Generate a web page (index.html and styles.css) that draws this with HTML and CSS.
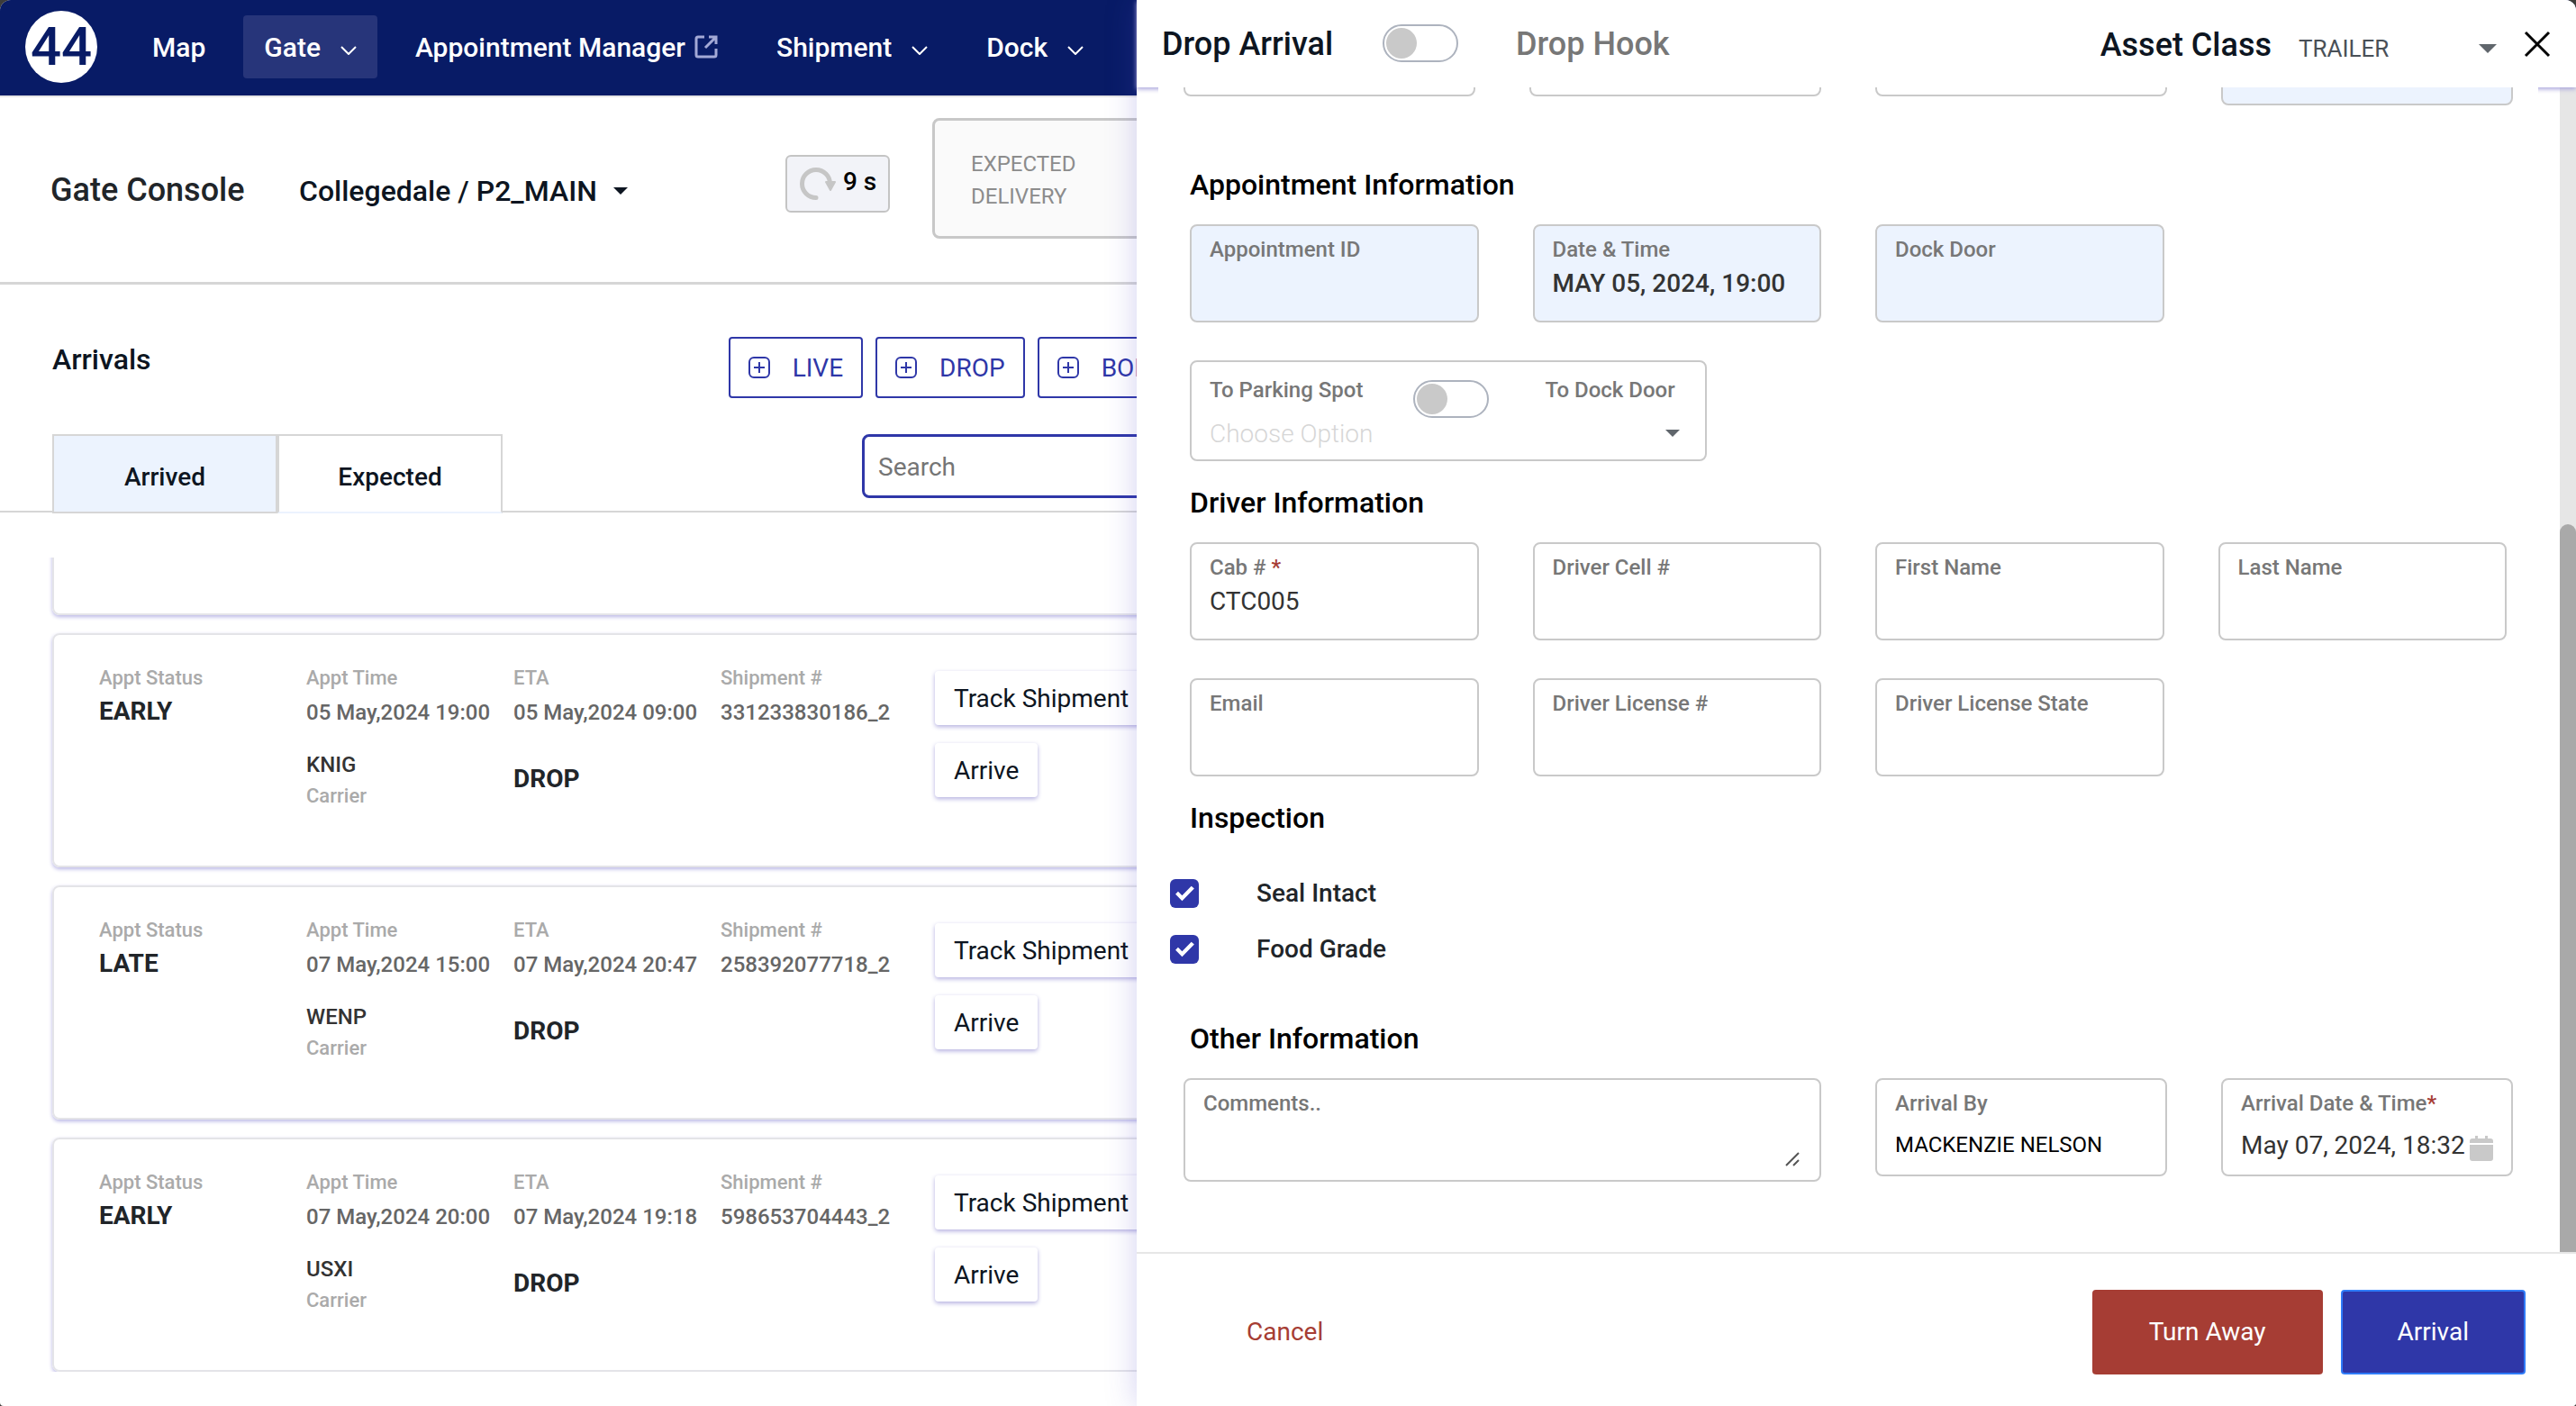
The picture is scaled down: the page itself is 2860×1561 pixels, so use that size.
FILE: index.html
```html
<!DOCTYPE html>
<html lang="en">
<head>
  <meta charset="UTF-8">
  <meta name="viewport" content="width=device-width, initial-scale=1.0">
  <title>Gate Console</title>
  <link rel="stylesheet" href="styles.css">
</head>
<body>
  <div class="app">
    <nav class="navbar">
      <a class="logo" href="#">44</a>
      <a class="nav-item" href="#">Map</a>
      <a class="nav-item active" href="#">Gate
        <svg class="chevron" viewBox="0 0 18 10"><path d="M1 1l8 8 8-8"/></svg>
      </a>
      <a class="nav-item" href="#">Appointment Manager
        <svg class="external" viewBox="0 0 26 26"><path d="M11 2H4a2 2 0 0 0-2 2v18a2 2 0 0 0 2 2h18a2 2 0 0 0 2-2v-7M16 2h8v8M24 2L12 14"/></svg>
      </a>
      <a class="nav-item" href="#">Shipment
        <svg class="chevron" viewBox="0 0 18 10"><path d="M1 1l8 8 8-8"/></svg>
      </a>
      <a class="nav-item" href="#">Dock
        <svg class="chevron" viewBox="0 0 18 10"><path d="M1 1l8 8 8-8"/></svg>
      </a>
    </nav>

    <header class="page-header">
      <h1>Gate Console</h1>
      <button class="site-picker">Collegedale / P2_MAIN
        <svg class="caret" viewBox="0 0 16 8"><path d="M0 0h16l-8 8z"/></svg>
      </button>
      <button class="refresh">
        <svg class="refresh-icon" viewBox="0 0 40 38"><path class="arc" d="M18 34.500A15.500 15.500 0 1 1 33.500 19"/><path class="head" d="M29 17h10l-5 9z"/></svg>
        9 s
      </button>
      <div class="stat">EXPECTED<br>DELIVERY</div>
    </header>

    <main class="arrivals">
      <div class="toolbar">
        <h2>Arrivals</h2>
        <button class="add">
          <svg class="plus" viewBox="0 0 24 24"><rect x="1" y="1" width="22" height="22" rx="5"/><path d="M12 6v12M6 12h12"/></svg>LIVE
        </button>
        <button class="add">
          <svg class="plus" viewBox="0 0 24 24"><rect x="1" y="1" width="22" height="22" rx="5"/><path d="M12 6v12M6 12h12"/></svg>DROP
        </button>
        <button class="add">
          <svg class="plus" viewBox="0 0 24 24"><rect x="1" y="1" width="22" height="22" rx="5"/><path d="M12 6v12M6 12h12"/></svg>BOBTAIL
        </button>
      </div>
      <div class="tabs">
        <button class="tab selected">Arrived</button>
        <button class="tab">Expected</button>
        <input class="search" type="search" placeholder="Search" aria-label="Search">
      </div>

      <div class="cards">
        <article class="card"></article>
        <article class="card">
          <div><p class="key">Appt Status</p><p class="status">EARLY</p></div>
          <div><p class="key">Appt Time</p><p class="value">05 May,2024 19:00</p><p class="carrier">KNIG</p><p class="key">Carrier</p></div>
          <div><p class="key">ETA</p><p class="value">05 May,2024 09:00</p><p class="type">DROP</p></div>
          <div><p class="key">Shipment #</p><p class="value">331233830186_2</p></div>
          <div class="actions"><button>Track Shipment</button><button>Arrive</button></div>
        </article>
        <article class="card">
          <div><p class="key">Appt Status</p><p class="status">LATE</p></div>
          <div><p class="key">Appt Time</p><p class="value">07 May,2024 15:00</p><p class="carrier">WENP</p><p class="key">Carrier</p></div>
          <div><p class="key">ETA</p><p class="value">07 May,2024 20:47</p><p class="type">DROP</p></div>
          <div><p class="key">Shipment #</p><p class="value">258392077718_2</p></div>
          <div class="actions"><button>Track Shipment</button><button>Arrive</button></div>
        </article>
        <article class="card">
          <div><p class="key">Appt Status</p><p class="status">EARLY</p></div>
          <div><p class="key">Appt Time</p><p class="value">07 May,2024 20:00</p><p class="carrier">USXI</p><p class="key">Carrier</p></div>
          <div><p class="key">ETA</p><p class="value">07 May,2024 19:18</p><p class="type">DROP</p></div>
          <div><p class="key">Shipment #</p><p class="value">598653704443_2</p></div>
          <div class="actions"><button>Track Shipment</button><button>Arrive</button></div>
        </article>
      </div>
    </main>

    <aside class="drawer">
      <header class="drawer-header">
        <label class="drawer-title" for="mode">Drop Arrival</label>
        <input class="toggle" type="checkbox" id="mode">
        <span class="drawer-title muted">Drop Hook</span>
        <label class="drawer-title asset" for="asset">Asset Class</label>
        <div class="asset-picker">
          <select id="asset"><option>TRAILER</option></select>
          <svg class="caret" viewBox="0 0 20 10"><path d="M0 0h20l-10 10z"/></svg>
        </div>
        <button class="close" aria-label="Close">
          <svg viewBox="0 0 30 30"><path d="M2 2l26 26M28 2L2 28"/></svg>
        </button>
      </header>

      <div class="drawer-body">
        <form class="form">
          <div class="grid wide top-row">
            <div class="field"></div>
            <div class="field"></div>
            <div class="field"></div>
            <div class="field locked"></div>
          </div>

          <h3>Appointment Information</h3>
          <div class="grid">
            <div class="field locked"><label for="apptId">Appointment ID</label><input type="text" id="apptId" readonly></div>
            <div class="field locked"><label for="apptTime">Date &amp; Time</label><input type="text" id="apptTime" class="strong" value="MAY 05, 2024, 19:00" readonly></div>
            <div class="field locked"><label for="dockDoor">Dock Door</label><input type="text" id="dockDoor" readonly></div>
          </div>
          <div class="destination">
            <div class="destination-mode">
              <label for="destMode">To Parking Spot</label>
              <input class="toggle" type="checkbox" id="destMode">
              <label for="destMode">To Dock Door</label>
            </div>
            <div class="destination-option">
              <select aria-label="Destination"><option>Choose Option</option></select>
              <svg class="caret" viewBox="0 0 16 8"><path d="M0 0h16l-8 8z"/></svg>
            </div>
          </div>

          <h3 class="near">Driver Information</h3>
          <div class="grid">
            <div class="field"><label for="cab">Cab # <span class="req">*</span></label><input type="text" id="cab" value="CTC005"></div>
            <div class="field"><label for="cell">Driver Cell #</label><input type="text" id="cell"></div>
            <div class="field"><label for="first">First Name</label><input type="text" id="first"></div>
            <div class="field"><label for="last">Last Name</label><input type="text" id="last"></div>
            <div class="field"><label for="email">Email</label><input type="text" id="email"></div>
            <div class="field"><label for="license">Driver License #</label><input type="text" id="license"></div>
            <div class="field"><label for="state">Driver License State</label><input type="text" id="state"></div>
          </div>

          <h3 class="near">Inspection</h3>
          <div class="checks">
            <label><input type="checkbox" checked> Seal Intact</label>
            <label><input type="checkbox" checked> Food Grade</label>
          </div>

          <h3>Other Information</h3>
          <div class="grid wide">
            <div class="field comments"><label for="comments">Comments..</label><textarea id="comments"></textarea>
              <svg class="grip" viewBox="0 0 16 16"><path d="M1 15L15 1M9 15l6-6"/></svg>
            </div>
            <div class="field roomy"><label for="by">Arrival By</label><input type="text" id="by" class="small" value="MACKENZIE NELSON"></div>
            <div class="field roomy"><label for="at">Arrival Date &amp; Time<span class="req">*</span></label>
              <div class="date">
                <input type="text" id="at" value="May 07, 2024, 18:32">
                <svg class="calendar" viewBox="0 0 26 28"><path d="M6 0h3v3h8V0h3v3h3a3 3 0 0 1 3 3v2H0V6a3 3 0 0 1 3-3h3zM0 10h26v15a3 3 0 0 1-3 3H3a3 3 0 0 1-3-3z"/></svg>
              </div>
            </div>
          </div>
        </form>
        <div class="scrollbar"><div class="thumb"></div></div>
      </div>

      <footer class="drawer-footer">
        <button class="cancel">Cancel</button>
        <button class="turn-away">Turn Away</button>
        <button class="arrival">Arrival</button>
      </footer>
    </aside>
  </div>
</body>
</html>
```
FILE: styles.css
```css
* {
  box-sizing: border-box;
}
body {
  margin: 0;
  background: #3c3c3a;
  font-family: Roboto, sans-serif;
  color: #0d1521;
}
h1, h2, h3, p {
  margin: 0;
}
button, input, select, textarea {
  font: inherit;
  color: inherit;
  margin: 0;
  padding: 0;
  border: 0;
  background: none;
  outline: 0;
}
select, .toggle, .search {
  appearance: none;
}
a {
  color: inherit;
  text-decoration: none;
}
svg {
  flex: none;
}
.app {
  position: relative;
  display: flex;
  flex-direction: column;
  height: 100vh;
  overflow: hidden;
  background: #fff;
  border-radius: 12px 12px 4px 4px;
}

/* navigation */
.navbar {
  display: flex;
  flex: none;
  align-items: center;
  height: 108px;
  padding: 0 28px 2px;
  background: #081b66;
  border-bottom: 2px solid #e6e6e6;
  color: #fff;
  font-size: 30px;
  font-weight: 500;
}
.logo {
  width: 80px;
  height: 80px;
  margin-right: 38px;
  border-radius: 50%;
  background: #fff;
  color: #081b66;
  font-size: 60px;
  line-height: 80px;
  text-align: center;
}
.nav-item {
  display: flex;
  align-items: center;
  gap: 22px;
  height: 70px;
  margin-right: 19px;
  padding: 0 23px;
  border-radius: 4px;
}
.nav-item.active {
  background: #27357a;
}
.nav-item:has(.external) {
  gap: 10px;
}
.chevron {
  width: 18px;
  height: 10px;
  margin-top: 8px;
  fill: none;
  stroke: #fff;
  stroke-width: 2;
}
.external {
  width: 26px;
  height: 26px;
  fill: none;
  stroke: #a3a9d6;
  stroke-width: 3;
}

/* page header */
.page-header {
  display: flex;
  flex: none;
  align-items: center;
  height: 208px;
  padding-left: 56px;
  border-bottom: 3px solid #d6d6d6;
}
.page-header h1 {
  width: 276px;
  color: #212529;
  font-size: 36px;
  font-weight: 500;
}
.site-picker {
  display: flex;
  align-items: center;
  justify-content: space-between;
  width: 365px;
  padding-top: 2px;
  font-size: 32px;
  font-weight: 500;
}
.site-picker .caret {
  width: 16px;
  fill: #0d1521;
}
.refresh {
  display: flex;
  align-items: center;
  gap: 8px;
  width: 116px;
  height: 64px;
  margin: 0 47px 14px 175px;
  padding: 0 0 4px 14px;
  border: 2px solid #c4c4c4;
  border-radius: 6px;
  background: #f2f3f8;
  color: #000;
  font-size: 28px;
  font-weight: 500;
}
.refresh-icon {
  width: 40px;
  height: 38px;
  margin-top: 4px;
}
.refresh-icon .arc {
  fill: none;
  stroke: #c6c6c6;
  stroke-width: 5;
  stroke-linecap: round;
}
.refresh-icon .head {
  fill: #c6c6c6;
  stroke: #c6c6c6;
  stroke-width: 2;
  stroke-linejoin: round;
}
.stat {
  flex: 1;
  height: 134px;
  margin: 0 58px 26px 0;
  padding: 30px 40px;
  border: 3px solid #c8c8c8;
  border-radius: 8px;
  background: #fafafa;
  color: #8c8c8c;
  font-size: 24px;
  line-height: 36px;
}

/* arrivals */
.arrivals {
  display: flex;
  flex: 1;
  flex-direction: column;
  min-height: 0;
}
.toolbar {
  display: flex;
  gap: 14px;
  width: 50%;
  padding: 58px 75px 40px 58px;
}
.toolbar h2 {
  flex: 1;
  font-size: 32px;
  font-weight: 500;
  line-height: 50px;
}
.add {
  display: flex;
  align-items: center;
  gap: 25px;
  height: 68px;
  padding: 0 20px;
  border: 2px solid #2f37a8;
  border-radius: 4px;
  color: #2f37a8;
  font-size: 28px;
}
.plus {
  width: 24px;
  height: 24px;
  fill: none;
  stroke: #2f37a8;
  stroke-width: 2;
}
.tabs {
  display: flex;
  height: 87px;
  padding-left: 58px;
  border-bottom: 2px solid #d6d6d6;
}
.tab {
  width: 250px;
  height: 88px;
  padding-top: 6px;
  border: 2px solid #d6d6d6;
  border-bottom-color: #ecf3fe;
  background: #fff;
  font-size: 28px;
  font-weight: 500;
}
.tab.selected {
  border-color: #d6d6d6;
  background: #ecf3fe;
}
.search {
  width: 415px;
  height: 71px;
  margin-left: 399px;
  padding: 2px 15px 0;
  border: 3px solid #2f37a8;
  border-radius: 8px;
  font-size: 28px;
}
.search::placeholder {
  color: #757575;
}
.cards {
  display: flex;
  flex: 1;
  flex-direction: column;
  justify-content: flex-end;
  gap: 20px;
  width: 50%;
  min-height: 0;
  margin: 50px 0 38px;
  padding: 0 58px;
  overflow: hidden;
}
.card {
  display: grid;
  flex: none;
  grid-template-columns: repeat(4, 230px) auto;
  justify-content: start;
  height: 260px;
  padding: 34px 50px;
  border: 2px solid #e4e4e8;
  border-radius: 8px;
  box-shadow: 0 2px 4px #b9b6e6;
}
.key {
  color: #aaa;
  font-size: 22px;
  font-weight: 500;
  line-height: 28px;
}
.value, .carrier {
  padding-top: 8px;
  color: #666;
  font-size: 24px;
  font-weight: 500;
  line-height: 32px;
}
.carrier {
  padding: 26px 0 5px;
  color: #333;
}
.status, .type {
  padding-top: 5px;
  color: #212529;
  font-size: 28px;
  font-weight: 700;
  line-height: 36px;
}
.type {
  padding-top: 40px;
}
.actions {
  display: flex;
  flex-direction: column;
  align-items: flex-start;
  gap: 20px;
  margin: 6px 0 0 8px;
}
.actions button {
  height: 60px;
  padding: 0 21px;
  border-radius: 4px;
  background: #fff;
  box-shadow: 0 2px 5px #b4b0e0;
  font-size: 28px;
}

/* drawer over the page */
.drawer {
  position: absolute;
  top: 0;
  right: 0;
  bottom: 0;
  left: 1262px;
  display: flex;
  flex-direction: column;
  background: #fff;
  box-shadow: 0 0 32px rgba(80, 70, 200, 0.25);
}
.drawer-header {
  display: flex;
  position: relative;
  z-index: 1;
  align-items: center;
  height: 97px;
  padding: 0 28px;
  background: #fff;
  box-shadow: 0 2px 5px #a9a5dc;
}
.drawer-title {
  font-size: 36px;
  font-weight: 500;
}
.drawer-title.muted {
  color: #777;
}
.drawer-title.asset {
  margin-left: auto;
  padding-top: 2px;
}
.toggle {
  flex: none;
  width: 84px;
  height: 42px;
  padding: 2px;
  border: 2px solid #adb3be;
  border-radius: 21px;
  background: #fff;
}
.toggle::before {
  content: "";
  display: block;
  width: 34px;
  height: 34px;
  border-radius: 50%;
  background: #c9c9c9;
}
.drawer-header .toggle {
  margin: 0 64px 2px 55px;
}
.asset-picker {
  display: flex;
  align-items: center;
  width: 220px;
  margin: 10px 30px 0;
}
.asset-picker select {
  flex: 1;
  color: #495057;
  font-size: 26px;
}
.caret {
  width: 20px;
  fill: #60666c;
}
.close svg {
  display: block;
  width: 30px;
  height: 30px;
  fill: none;
  stroke: #000;
  stroke-width: 3;
}
.drawer-body {
  display: flex;
  flex: 1;
  min-height: 0;
}
.form {
  position: relative;
  z-index: 2;
  display: flex;
  flex: 1;
  flex-direction: column;
  justify-content: flex-end;
  margin: 0 24px;
  padding: 0 35px 78px;
  overflow: hidden;
  background: #fff;
}
.form > * {
  flex: none;
}
.form h3 {
  margin: 68px 0 24px;
  color: #000;
  font-size: 32px;
  font-weight: 500;
  line-height: 40px;
}
.form h3.near {
  margin-top: 26px;
}
.grid {
  display: grid;
  grid-template-columns: repeat(4, 1fr);
  gap: 42px 60px;
  align-items: start;
}
.grid.wide {
  margin: 0 -7px;
}
.top-row .locked {
  margin-top: 10px;
}
.field {
  display: flex;
  position: relative;
  flex-direction: column;
  gap: 5px;
  min-width: 0;
  height: 109px;
  padding: 12px 20px 0;
  border: 2px solid #c9c9c9;
  border-radius: 8px;
  background: #fff;
  color: #333;
}
.field.locked {
  background: #ecf3fe;
}
.field.roomy {
  gap: 14px;
}
.field label, .destination label {
  color: #777;
  font-size: 24px;
  line-height: 28px;
}
.field label {
  font-weight: 500;
}
.field input {
  width: 100%;
  height: 36px;
  font-size: 28px;
}
.field input.strong {
  font-weight: 500;
}
.field input.small {
  color: #000;
  font-size: 24px;
}
.field .req {
  color: #a63d34;
}
.field.comments {
  grid-column: span 2;
  height: 115px;
}
.comments textarea {
  flex: 1;
  margin-bottom: 14px;
  font-size: 28px;
  resize: none;
}
.grip {
  position: absolute;
  right: 22px;
  bottom: 15px;
  width: 16px;
  height: 16px;
  fill: none;
  stroke: #555;
  stroke-width: 2;
}
.date {
  display: flex;
  align-items: center;
}
.date input {
  min-width: 0;
}
.calendar {
  width: 26px;
  height: 28px;
  margin-top: 8px;
  fill: #c9c9c9;
}
.destination {
  width: 574px;
  height: 112px;
  margin-top: 42px;
  padding: 17px 28px 0 20px;
  border: 2px solid #c9c9c9;
  border-radius: 8px;
}
.destination-mode {
  display: flex;
  height: 44px;
}
.destination label {
  font-weight: 500;
}
.destination-mode .toggle {
  margin: 3px 62px 0 56px;
}
.destination-option {
  display: flex;
  align-items: center;
}
.destination-option select {
  flex: 1;
  height: 36px;
  color: #d6d6d6;
  font-size: 28px;
  font-weight: 300;
}
.destination-option .caret {
  width: 16px;
}
.checks {
  display: flex;
  flex-direction: column;
  gap: 28px;
  margin: 23px 0 0 -22px;
}
.checks label {
  display: flex;
  gap: 64px;
  color: #212529;
  font-size: 28px;
  font-weight: 500;
  line-height: 34px;
}
.checks + h3 {
  margin-top: 62px;
}
.checks input {
  appearance: none;
  width: 32px;
  height: 32px;
  margin-top: 1px;
  border-radius: 6px;
  background: #2f37a8;
}
.checks input::before {
  content: "";
  display: block;
  height: 32px;
  background: #fff;
  clip-path: polygon(19% 52%, 28% 43%, 42% 57%, 74% 24%, 84% 33%, 42% 76%);
}
.scrollbar {
  display: flex;
  flex-direction: column;
  justify-content: flex-end;
  width: 18px;
  background: #e6e6e6;
}
.thumb {
  height: 808px;
  border-radius: 9px 9px 0 0;
  background: #a9a9a9;
}
.drawer-footer {
  display: flex;
  align-items: center;
  gap: 20px;
  height: 171px;
  padding: 4px 56px 0 122px;
  border-top: 2px solid #e6e6e6;
  font-size: 28px;
}
.cancel {
  margin-right: auto;
  color: #a63d34;
}
.turn-away, .arrival {
  height: 94px;
  padding: 0 61px;
  border: 2px solid #a63d34;
  border-radius: 4px;
  background: #a63d34;
  color: #fff;
}
.arrival {
  border-color: #2f7bf8;
  background: #2f37a8;
}
```
